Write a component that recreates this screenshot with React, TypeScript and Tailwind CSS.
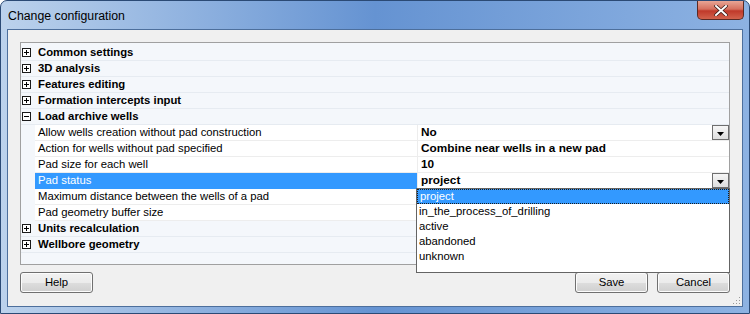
import React from "react";

const font = { fontFamily: '"Liberation Sans", Arial, sans-serif' };

type Row =
    | { kind: "cat"; label: string; open?: boolean }
    | { kind: "prop"; label: string; value: string; selected?: boolean; combo?: boolean };

const rows: Row[] = [
    { kind: "cat", label: "Common settings" },
    { kind: "cat", label: "3D analysis" },
    { kind: "cat", label: "Features editing" },
    { kind: "cat", label: "Formation intercepts input" },
    { kind: "cat", label: "Load archive wells", open: true },
    { kind: "prop", label: "Allow wells creation without pad construction", value: "No", combo: true },
    { kind: "prop", label: "Action for wells without pad specified", value: "Combine near wells in a new pad" },
    { kind: "prop", label: "Pad size for each well", value: "10" },
    { kind: "prop", label: "Pad status", value: "project", selected: true, combo: true },
    { kind: "prop", label: "Maximum distance between the wells of a pad", value: "" },
    { kind: "prop", label: "Pad geometry buffer size", value: "" },
    { kind: "cat", label: "Units recalculation" },
    { kind: "cat", label: "Wellbore geometry" },
];

const options = ["project", "in_the_process_of_drilling", "active", "abandoned", "unknown"];

function Toggle({ open }: { open?: boolean }) {
    return (
        <svg width="9" height="9" viewBox="0 0 9 9" className="block">
            <rect x="0.5" y="0.5" width="8" height="8" fill="#fff" stroke="#1a1a1a" />
            <line x1="2" y1="4.5" x2="7" y2="4.5" stroke="#000" />
            {!open && <line x1="4.5" y1="2" x2="4.5" y2="7" stroke="#000" />}
        </svg>
    );
}

function ComboButton() {
    return (
        <div className="w-[17px] h-[15px] border border-[#6e6e6e] bg-gradient-to-b from-[#f6f6f6] to-[#dedede] flex items-end justify-center pb-[3px]">
            <svg width="7" height="4" viewBox="0 0 7 4" className="block">
                <polygon points="0,0 7,0 3.5,4" fill="#000" />
            </svg>
        </div>
    );
}

function WinButton({ label }: { label: string }) {
    return (
        <button className="w-[73px] h-[21px] rounded-[3px] border border-[#707070] bg-[linear-gradient(#f2f2f2_0%,#ebebeb_50%,#dddddd_51%,#cfcfcf_100%)] text-[11.3px] text-black leading-none shadow-[inset_0_0_0_1px_#fcfcfc]">
            {label}
        </button>
    );
}

export default function App() {
    return (
        <div style={font} className="w-[750px] h-[314px] flex flex-col border border-[#2b4a75] rounded-t-[7px] bg-gradient-to-r from-[#bcd2ec] via-[#6593d2] to-[#8db2e2] overflow-hidden">
            {/* title bar */}
            <div className="h-[28px] flex justify-between shrink-0">
                <span className="pl-[7px] pt-[6px] text-[12.3px] text-black">Change configuration</span>
                <div className="mr-[5px] w-[47px] h-[19px] rounded-b-[5px] border border-t-0 border-[#5a2a24] bg-[linear-gradient(#e8a595_0%,#d5705e_45%,#c0392a_55%,#d2624c_100%)] flex items-center justify-center">
                    <svg width="14" height="11" viewBox="0 0 14 11" className="block">
                        <path d="M2 1 L12 10 M12 1 L2 10" stroke="#3a1a15" strokeWidth="3.4" strokeLinecap="square" />
                        <path d="M2 1 L12 10 M12 1 L2 10" stroke="#ffffff" strokeWidth="2" strokeLinecap="square" />
                    </svg>
                </div>
            </div>

            {/* client */}
            <div className="relative mx-[6px] h-[278px] border border-[#4d6f9c] bg-[#f0f0f0] flex flex-col px-[12px] pt-[12px]">
                <div className="h-[223px] border border-[#a0a0a0] bg-[#f4f7fb] flex flex-col pt-[2px]">
                    {rows.map((r, i) =>
                        r.kind === "cat" ? (
                            <div key={i} className="h-[16px] shrink-0 flex items-center border-b border-[#e6ebf1]">
                                <div className="w-[14px] flex pl-[1px]">
                                    <Toggle open={r.open} />
                                </div>
                                <span className="pl-[3px] text-[11.3px] font-bold text-black">{r.label}</span>
                            </div>
                        ) : (
                            <div key={i} className="h-[16px] shrink-0 flex">
                                <div className="w-[14px]" />
                                <div className={`w-[382px] flex items-center pl-[3px] text-[11.3px] border-b ${r.selected ? "bg-[#3399ff] text-white border-[#3399ff]" : "bg-white text-black border-[#ededed]"}`}>
                                    {r.label}
                                </div>
                                <div className="flex-1 flex items-center justify-between bg-white border-l border-b border-[#ededed] pl-[3px]">
                                    <span className="text-[11.8px] font-bold text-black">{r.value}</span>
                                    {r.combo && <ComboButton />}
                                </div>
                            </div>
                        )
                    )}
                </div>

                <div className="mt-[7px] flex justify-between">
                    <WinButton label="Help" />
                    <div className="flex gap-[9px]">
                        <WinButton label="Save" />
                        <WinButton label="Cancel" />
                    </div>
                </div>

                {/* open dropdown list */}
                <div className="absolute left-[408px] top-[158px] w-[314px] h-[85px] border border-[#646464] bg-white flex flex-col">
                    {options.map((o, i) => (
                        <div key={o} className={`h-[15px] shrink-0 flex items-center pl-[2px] text-[11.3px] ${i === 0 ? "bg-[#3399ff] text-white border border-dotted border-[#1a1a1a]" : "text-black"}`}>
                            {o}
                        </div>
                    ))}
                </div>

                {/* size grip */}
                <svg width="10" height="10" viewBox="0 0 10 10" className="absolute right-[1px] bottom-[1px]">
                    {[[8, 2], [5, 5], [8, 5], [2, 8], [5, 8], [8, 8]].map(([x, y], k) => (
                        <rect key={k} x={x} y={y} width="1" height="1" fill="#9a9a9a" />
                    ))}
                </svg>
            </div>
        </div>
    );
}
